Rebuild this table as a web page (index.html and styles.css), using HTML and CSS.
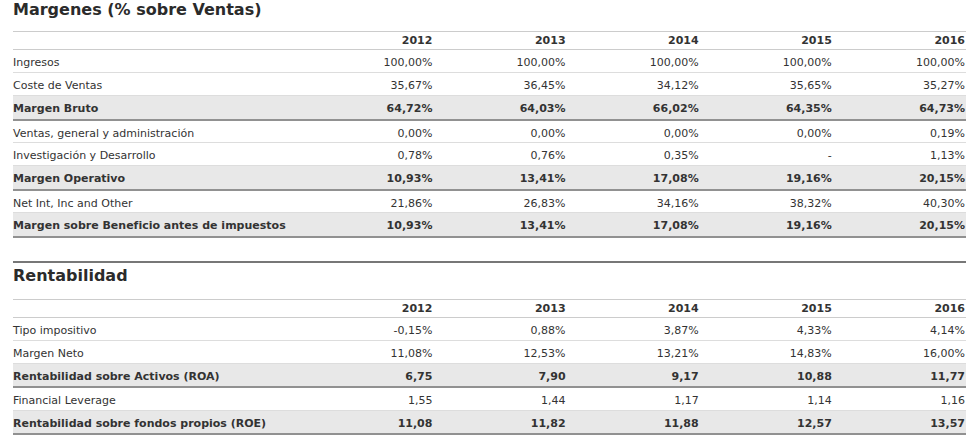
FILE: index.html
```html
<!DOCTYPE html>
<html lang="es">
<head>
<meta charset="utf-8">
<title>Margenes y Rentabilidad</title>
<link rel="stylesheet" href="styles.css">
</head>
<body>
<div class="page">
  <section class="block">
    <h2 class="block-title">Margenes (% sobre Ventas)</h2>
    <table class="ratios">
      <colgroup><col class="c-label"><col class="c-year"><col class="c-year"><col class="c-year"><col class="c-year"><col class="c-year"></colgroup>
      <thead>
        <tr><th></th><th>2012</th><th>2013</th><th>2014</th><th>2015</th><th>2016</th></tr>
      </thead>
      <tbody>
        <tr><td>Ingresos</td><td>100,00%</td><td>100,00%</td><td>100,00%</td><td>100,00%</td><td>100,00%</td></tr>
        <tr><td>Coste de Ventas</td><td>35,67%</td><td>36,45%</td><td>34,12%</td><td>35,65%</td><td>35,27%</td></tr>
        <tr class="total"><td>Margen Bruto</td><td>64,72%</td><td>64,03%</td><td>66,02%</td><td>64,35%</td><td>64,73%</td></tr>
        <tr><td>Ventas, general y administración</td><td>0,00%</td><td>0,00%</td><td>0,00%</td><td>0,00%</td><td>0,19%</td></tr>
        <tr><td>Investigación y Desarrollo</td><td>0,78%</td><td>0,76%</td><td>0,35%</td><td>-</td><td>1,13%</td></tr>
        <tr class="total"><td>Margen Operativo</td><td>10,93%</td><td>13,41%</td><td>17,08%</td><td>19,16%</td><td>20,15%</td></tr>
        <tr><td>Net Int, Inc and Other</td><td>21,86%</td><td>26,83%</td><td>34,16%</td><td>38,32%</td><td>40,30%</td></tr>
        <tr class="total"><td>Margen sobre Beneficio antes de impuestos</td><td>10,93%</td><td>13,41%</td><td>17,08%</td><td>19,16%</td><td>20,15%</td></tr>
      </tbody>
    </table>
  </section>
  <section class="block block-second">
    <h2 class="block-title">Rentabilidad</h2>
    <table class="ratios">
      <colgroup><col class="c-label"><col class="c-year"><col class="c-year"><col class="c-year"><col class="c-year"><col class="c-year"></colgroup>
      <thead>
        <tr><th></th><th>2012</th><th>2013</th><th>2014</th><th>2015</th><th>2016</th></tr>
      </thead>
      <tbody>
        <tr><td>Tipo impositivo</td><td>-0,15%</td><td>0,88%</td><td>3,87%</td><td>4,33%</td><td>4,14%</td></tr>
        <tr><td>Margen Neto</td><td>11,08%</td><td>12,53%</td><td>13,21%</td><td>14,83%</td><td>16,00%</td></tr>
        <tr class="total"><td>Rentabilidad sobre Activos (ROA)</td><td>6,75</td><td>7,90</td><td>9,17</td><td>10,88</td><td>11,77</td></tr>
        <tr><td>Financial Leverage</td><td>1,55</td><td>1,44</td><td>1,17</td><td>1,14</td><td>1,16</td></tr>
        <tr class="total"><td>Rentabilidad sobre fondos propios (ROE)</td><td>11,08</td><td>11,82</td><td>11,88</td><td>12,57</td><td>13,57</td></tr>
      </tbody>
    </table>
  </section>
</div>
</body>
</html>
```

FILE: styles.css
```css
html, body {
  margin: 0;
  padding: 0;
  background: #ffffff;
}

body {
  font-family: "DejaVu Sans", Verdana, sans-serif;
  font-size: 11px;
  color: #333333;
}

.page {
  width: 953px;
  padding-left: 13px;
}

.block-title {
  margin: 0;
  padding: 0 0 11px 0;
  font-size: 16px;
  line-height: 20px;
  font-weight: bold;
  color: #2b2b2b;
}

.block-second {
  margin-top: 23px;
  border-top: 2px solid #777777;
}

.block-second .block-title {
  padding: 3px 0 13px 0;
}

.ratios {
  width: 953px;
  border-collapse: collapse;
  table-layout: fixed;
}

.c-label {
  width: 287px;
}

.c-year {
  width: 133px;
}

.ratios th {
  height: 17px;
  padding: 0 1px 0 0;
  text-align: right;
  font-weight: bold;
  line-height: 17px;
  border-top: 1px solid #cccccc;
  border-bottom: 1px solid #cccccc;
}

.ratios td {
  box-sizing: border-box;
  height: 23px;
  padding: 5px 1px 0 0;
  line-height: 16px;
  text-align: right;
  white-space: nowrap;
  vertical-align: top;
  border-bottom: 1px solid #dddddd;
}

.ratios td:first-child {
  text-align: left;
  padding-left: 0;
}

.ratios tr.total td {
  height: 24px;
  background: #e8e8e8;
  font-weight: bold;
  border-bottom: 2px solid #919191;
}
```
